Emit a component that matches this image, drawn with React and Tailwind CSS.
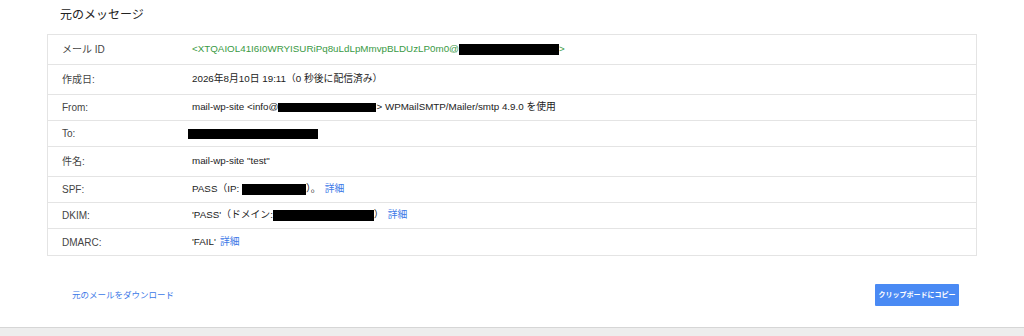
const FONT = { fontFamily: '"Liberation Sans", "Noto Sans CJK JP", sans-serif' };

function Redact({ w, h = 11 }) {
  return <span className="inline-block bg-black align-middle" style={{ width: w, height: h }} />;
}

function Link({ children }) {
  return <span className="text-[#3b78e7] ml-[4px]">{children}</span>;
}

const rows = [
  {
    label: 'メール ID',
    h: 'h-[30px]',
    value: (
      <span className="text-[#3a9a45]">
        &lt;XTQAIOL41I6I0WRYISURiPq8uLdLpMmvpBLDUzLP0m0@<Redact w={100} />&gt;
      </span>
    ),
  },
  { label: '作成日:', h: 'h-[30px]', value: '2026年8月10日 19:11（0 秒後に配信済み）' },
  {
    label: 'From:',
    h: 'h-[26px]',
    value: (
      <>
        mail-wp-site &lt;info@<Redact w={98} h={9} />&gt; WPMailSMTP/Mailer/smtp 4.9.0 を使用
      </>
    ),
  },
  { label: 'To:', h: 'h-[26px]', value: <span className="-ml-[4px]"><Redact w={130} h={10} /></span> },
  { label: '件名:', h: 'h-[30px]', value: 'mail-wp-site "test"' },
  {
    label: 'SPF:',
    h: 'h-[26px]',
    value: (
      <>
        PASS（IP: <Redact w={64} />）。<Link>詳細</Link>
      </>
    ),
  },
  {
    label: 'DKIM:',
    h: 'h-[26px]',
    value: (
      <>
        'PASS'（ドメイン:<Redact w={101} />）<Link>詳細</Link>
      </>
    ),
  },
  {
    label: 'DMARC:',
    h: 'h-[27px]',
    value: (
      <>
        'FAIL'<Link>詳細</Link>
      </>
    ),
  },
];

export default function App() {
  return (
    <div className="w-[1024px] h-[336px] bg-white flex flex-col overflow-hidden" style={FONT}>
      {/* heading */}
      <div className="h-[34px] pl-[60px] pt-[6px] text-[12px] text-[#222]">元のメッセージ</div>

      {/* header table */}
      <div className="ml-[47px] w-[930px] border border-[#e4e4e4] border-b-0">
        {rows.map((r) => (
          <div key={r.label} className={`flex items-center border-b border-[#e4e4e4] ${r.h}`}>
            <div className="w-[144px] pl-[14px] text-[10px] text-[#444]">{r.label}</div>
            <div className="flex-1 text-[9.8px] text-[#222] whitespace-nowrap">{r.value}</div>
          </div>
        ))}
      </div>

      {/* actions */}
      <div className="ml-[47px] w-[930px] pt-[28px] flex-1">
        <div className="h-[22px] flex items-center justify-between pl-[25px] pr-[18px]">
          <span className="text-[8.5px] text-[#3b78e7]">元のメールをダウンロード</span>
          <button className="w-[84px] h-[22px] bg-[#4a8af4] text-white text-[7px] font-bold whitespace-nowrap rounded-[1px]">
            クリップボードにコピー
          </button>
        </div>
      </div>

      {/* footer strip */}
      <div className="h-[9px] border-t border-[#d6d6d6] bg-[#ededed]" />
    </div>
  );
}
